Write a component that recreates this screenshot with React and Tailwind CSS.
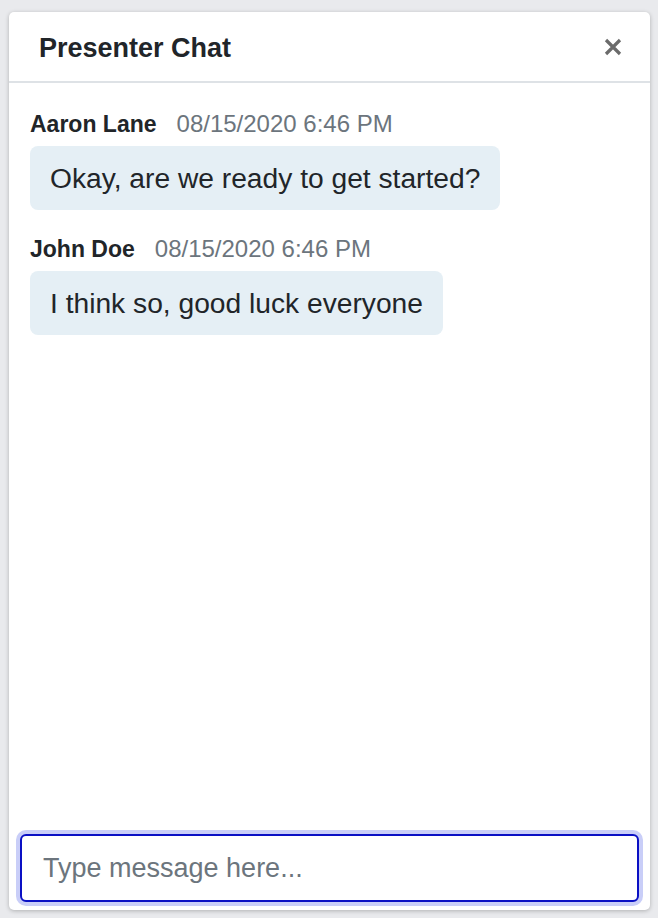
import React from "react";

const messages = [
  { name: "Aaron Lane", time: "08/15/2020 6:46 PM", text: "Okay, are we ready to get started?" },
  { name: "John Doe", time: "08/15/2020 6:46 PM", text: "I think so, good luck everyone" },
];

export default function App() {
  return (
    <div
      className="w-[658px] h-[918px] bg-[#e9eaed] pt-[12px] pl-[9px] pr-[8px] pb-[8px]"
      style={{ fontFamily: "'Liberation Sans', Arial, Helvetica, sans-serif" }}
    >
      <div className="h-full bg-white rounded-[5px] shadow-[0_1px_4px_rgba(0,0,0,0.25)] flex flex-col">
        <div className="h-[71px] border-b-2 border-[#dee2e6] flex items-center justify-between pl-[30px] pr-[28px] shrink-0">
          <span className="text-[27px] font-bold text-[#212529] pt-[3px]">Presenter Chat</span>
          <svg width="18" height="18" viewBox="0 0 18 18" className="text-[#6b6b6b]">
            <path d="M2 2 L16 16 M16 2 L2 16" stroke="currentColor" strokeWidth="3.2" strokeLinecap="butt" />
          </svg>
        </div>
        <div className="flex-1 flex flex-col pl-[21px] pt-[28px] gap-[26px]">
          {messages.map((m, i) => (
            <div key={i} className="flex flex-col items-start">
              <div className="flex items-baseline gap-[20px] leading-[26px]">
                <span className="text-[23px] font-bold text-[#212529]">{m.name}</span>
                <span className="text-[24px] text-[#6c757d]">{m.time}</span>
              </div>
              <div className="mt-[9px] bg-[#e5eff5] rounded-[8px] px-[20px] h-[64px] flex items-center text-[28.2px] text-[#212529]">
                {m.text}
              </div>
            </div>
          ))}
        </div>
        <div className="px-[7px] pb-[4px] shrink-0">
          <div className="rounded-[10px] p-[4px] bg-[#c9cef8]">
            <input
              className="w-full h-[68px] rounded-[6px] border-2 border-[#0a10c4] bg-white px-[21px] text-[27px] text-[#212529] placeholder:text-[#6c757d] outline-none"
              placeholder="Type message here..."
            />
          </div>
        </div>
      </div>
    </div>
  );
}
